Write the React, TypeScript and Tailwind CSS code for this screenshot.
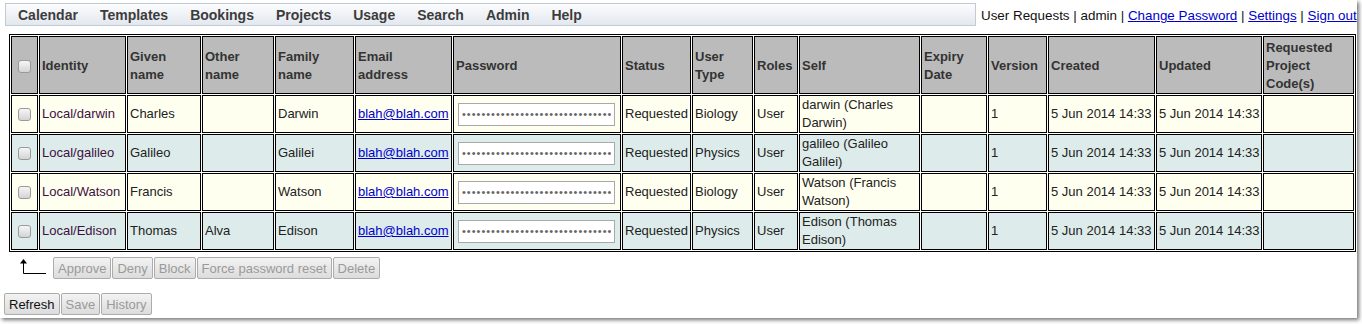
import React from "react";

const cols = [
  "w-[27px]", "w-[87px]", "w-[74px]", "w-[72px]", "w-[79px]", "w-[97px]", "w-[168px]", "w-[69px]",
  "w-[61px]", "w-[44px]", "w-[121px]", "w-[66px]", "w-[59px]", "w-[107px]", "w-[106px]", "w-[91px]",
];

const rows = [
  { id: "Local/darwin", given: "Charles", other: "", family: "Darwin", type: "Biology", self: "darwin (Charles Darwin)", bg: "bg-[#fffff0]" },
  { id: "Local/galileo", given: "Galileo", other: "", family: "Galilei", type: "Physics", self: "galileo (Galileo Galilei)", bg: "bg-[#ddecea]" },
  { id: "Local/Watson", given: "Francis", other: "", family: "Watson", type: "Biology", self: "Watson (Francis Watson)", bg: "bg-[#fffff0]" },
  { id: "Local/Edison", given: "Thomas", other: "Alva", family: "Edison", type: "Physics", self: "Edison (Thomas Edison)", bg: "bg-[#ddecea]" },
];

const navItems = ["Calendar", "Templates", "Bookings", "Projects", "Usage", "Search", "Admin", "Help"];

function Box() {
  return (
    <input
      type="checkbox"
      readOnly
      className="appearance-none block mx-auto w-[13px] h-[13px] border border-[#9a9a9a] rounded-[3px] bg-linear-to-b from-[#f6f6f6] to-[#d4d4d4]"
    />
  );
}

function Btn({ label, enabled = false }: { label: string; enabled?: boolean }) {
  return (
    <button
      type="button"
      className={
        "h-[22px] px-[4px] border border-[#acacac] rounded-[2px] bg-linear-to-b from-[#f3f3f3] to-[#dcdcdc] text-[13px] leading-[15px] " +
        (enabled ? "text-[#101010]" : "text-[#9a9a9a]")
      }
    >
      {label}
    </button>
  );
}

const th = "bg-[#bbbbbb] border border-black font-bold text-left align-middle px-[2px] pt-[2px] pb-0 leading-[18px] text-[#333333]";
const td = "border border-black px-[2px] py-0 leading-[18px] h-[38px] align-middle";

export default function App() {
  return (
    <div className="w-[1362px] h-[324px] bg-white font-['Liberation_Sans',Arial,sans-serif] text-[13px] text-[#222222]">
      <div className="w-[1357px] h-[318px] bg-white overflow-hidden shadow-[2px_2px_4px_rgba(0,0,0,0.55)] pt-[3px]">
        {/* top bar */}
        <div className="flex items-start whitespace-nowrap">
          <div className="ml-[5px] w-[971px] h-[23px] border border-[#c2cad6] bg-linear-to-b from-[#fbfcfd] to-[#e3e8ef] flex items-center pl-[12px] gap-[22px] font-bold text-[14px] text-[#3c3c3c] leading-[16px]">
            {navItems.map((n) => (
              <span key={n}>{n}</span>
            ))}
          </div>
          <div className="ml-[5px] mt-[5px] leading-[15px] text-[13.4px] text-[#111111]">
            User Requests | admin | <a className="text-[#0000cc] underline">Change Password</a> |{" "}
            <a className="text-[#0000cc] underline">Settings</a> | <a className="text-[#0000cc] underline">Sign out</a>
          </div>
        </div>

        {/* table */}
        <table className="ml-[9px] mt-[8px] w-[1347px] table-fixed border-separate border-spacing-[1px] border border-black">
          <colgroup>
            {cols.map((c, i) => (
              <col key={i} className={c} />
            ))}
          </colgroup>
          <thead>
            <tr>
              <th className={th}><Box /></th>
              <th className={th}>Identity</th>
              <th className={th}>Given<br />name</th>
              <th className={th}>Other<br />name</th>
              <th className={th}>Family<br />name</th>
              <th className={th}>Email<br />address</th>
              <th className={th}>Password</th>
              <th className={th}>Status</th>
              <th className={th}>User<br />Type</th>
              <th className={th}>Roles</th>
              <th className={th}>Self</th>
              <th className={th}>Expiry<br />Date</th>
              <th className={th}>Version</th>
              <th className={th}>Created</th>
              <th className={th}>Updated</th>
              <th className={th}>Requested<br />Project<br />Code(s)</th>
            </tr>
          </thead>
          <tbody>
            {rows.map((r) => (
              <tr key={r.id} className={r.bg}>
                <td className={td}><Box /></td>
                <td className={td + " whitespace-nowrap text-[#40103f]"}>{r.id}</td>
                <td className={td}>{r.given}</td>
                <td className={td}>{r.other}</td>
                <td className={td}>{r.family}</td>
                <td className={td + " whitespace-nowrap"}>
                  <a className="text-[#0000cc] underline">blah@blah.com</a>
                </td>
                <td className={td}>
                  <input
                    type="password"
                    readOnly
                    value="passwordpasswordpasswordpasswor"
                    className="block ml-[2px] w-[157px] h-[23px] border border-[#a9a9a9] bg-white px-[3px] text-[11px] tracking-[1px] text-[#666666] outline-none"
                  />
                </td>
                <td className={td + " whitespace-nowrap"}>Requested</td>
                <td className={td}>{r.type}</td>
                <td className={td}>User</td>
                <td className={td}>{r.self}</td>
                <td className={td}></td>
                <td className={td}>1</td>
                <td className={td + " whitespace-nowrap"}>5 Jun 2014 14:33</td>
                <td className={td + " whitespace-nowrap"}>5 Jun 2014 14:33</td>
                <td className={td}></td>
              </tr>
            ))}
          </tbody>
        </table>

        {/* action buttons */}
        <div className="flex items-center mt-[5px]">
          <svg className="ml-[18px]" width="30" height="20" viewBox="0 0 30 20">
            <path d="M5.5 4 V15.5 H28" fill="none" stroke="#000" strokeWidth="1" />
            <path d="M5.5 1 L2 5.5 H9 Z" fill="#000" />
          </svg>
          <div className="ml-[5px] flex gap-[1px]">
            <Btn label="Approve" />
            <Btn label="Deny" />
            <Btn label="Block" />
            <Btn label="Force password reset" />
            <Btn label="Delete" />
          </div>
        </div>

        <div className="flex gap-[1px] ml-[4px] mt-[14px]">
          <Btn label="Refresh" enabled />
          <Btn label="Save" />
          <Btn label="History" />
        </div>
      </div>
    </div>
  );
}
